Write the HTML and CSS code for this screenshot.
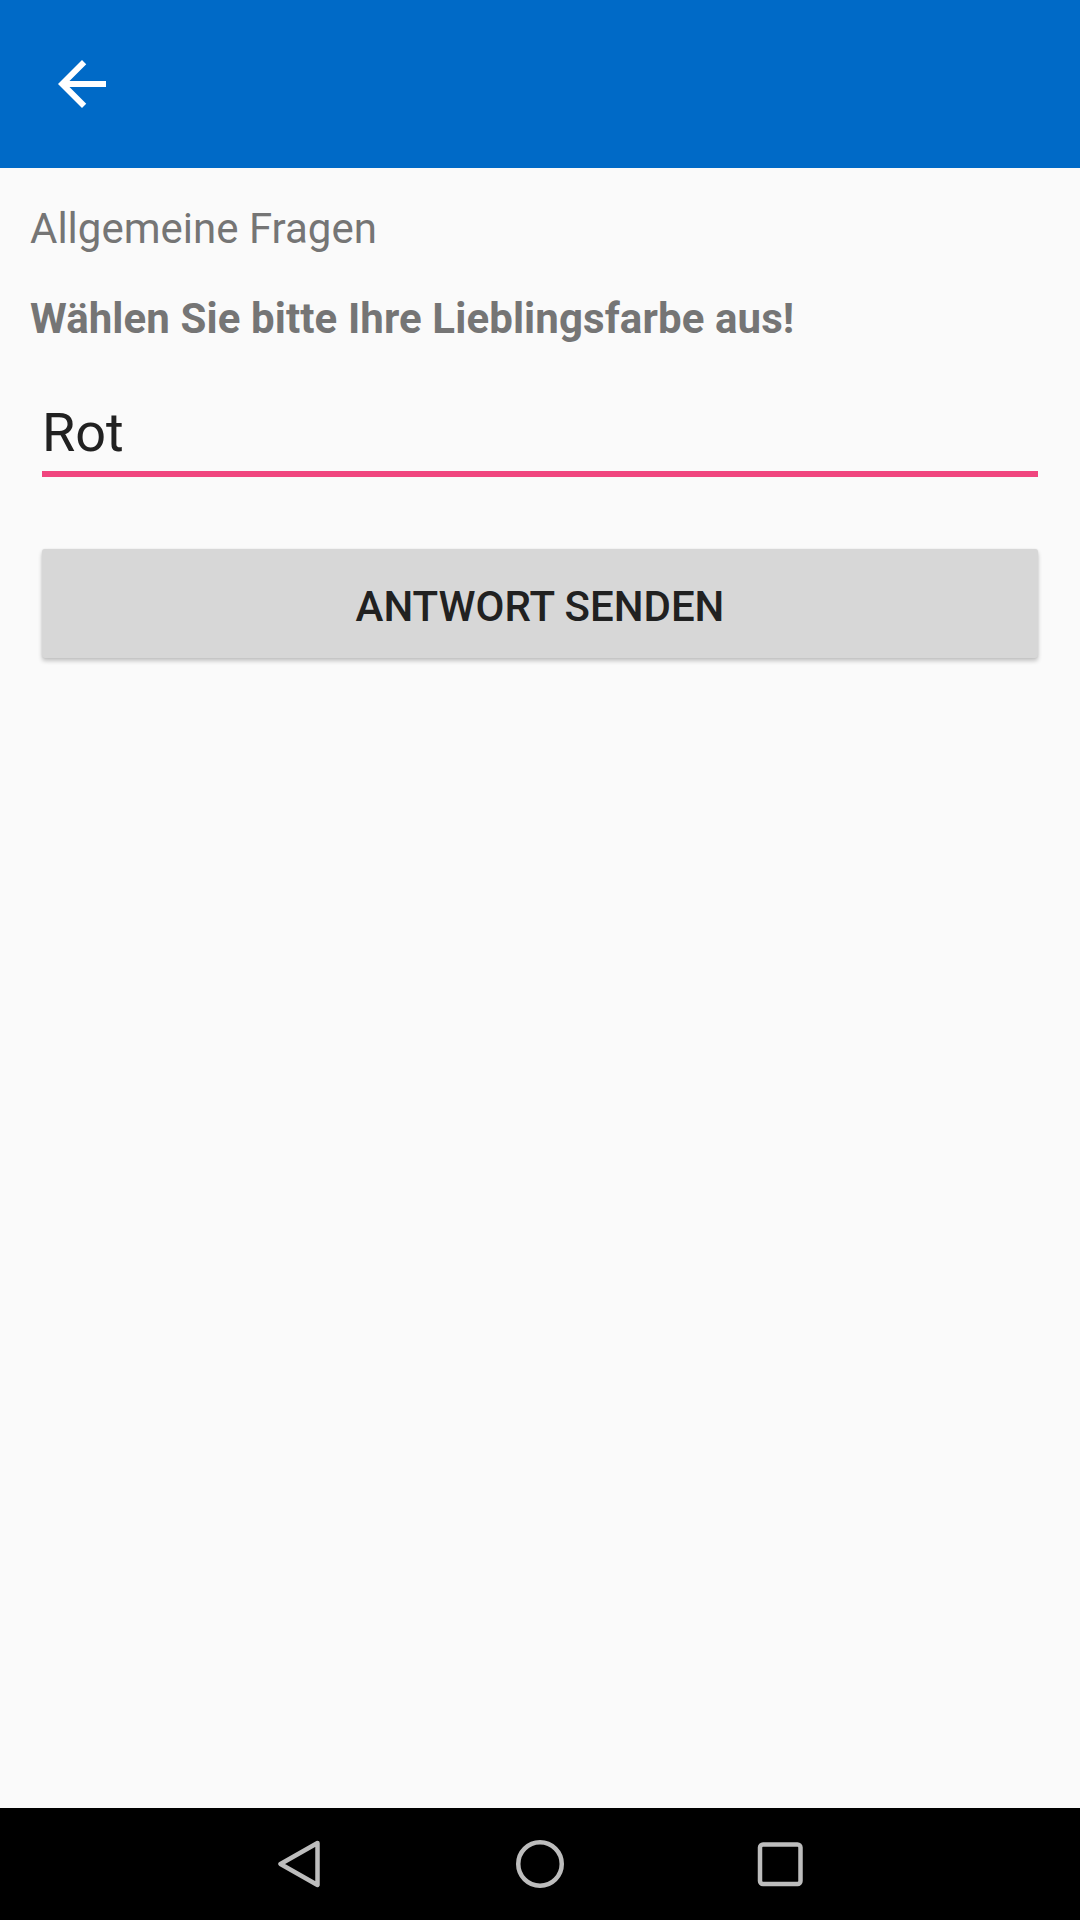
FILE: index.html
```html
<!DOCTYPE html>
<html lang="de">
<head>
<meta charset="utf-8">
<title>Allgemeine Fragen</title>
<link rel="stylesheet" href="styles.css">
</head>
<body>
<div class="screen">
  <header class="toolbar">
    <button class="nav-btn" aria-label="Zurück">
      <svg viewBox="0 0 24 24" width="72" height="72"><path fill="#ffffff" d="M20 11H7.830l5.590-5.590L12 4l-8 8 8 8 1.410-1.410L7.830 13H20v-2z"/></svg>
    </button>
  </header>
  <main class="content">
    <p class="category">Allgemeine Fragen</p>
    <p class="question">Wählen Sie bitte Ihre Lieblingsfarbe aus!</p>
    <div class="field">
      <span class="field-text">Rot</span>
    </div>
    <button class="send-btn">ANTWORT SENDEN</button>
  </main>
  <nav class="sysnav">
    <div class="sysnav-item">
      <svg viewBox="0 0 48 48" width="48" height="48"><path d="M41.5 3 L4.5 24 L41.5 45 Z" fill="none" stroke="#bdbdbd" stroke-width="4.5" stroke-linejoin="round"/></svg>
    </div>
    <div class="sysnav-item">
      <svg viewBox="0 0 48 48" width="48" height="48"><circle cx="24" cy="24" r="21.75" fill="none" stroke="#bdbdbd" stroke-width="4.5"/></svg>
    </div>
    <div class="sysnav-item">
      <svg viewBox="0 0 48 48" width="48" height="48"><rect x="4" y="4.5" width="40.5" height="39.5" rx="3" fill="none" stroke="#bdbdbd" stroke-width="4.5"/></svg>
    </div>
  </nav>
</div>
</body>
</html>
```

FILE: styles.css
```css
* { box-sizing: border-box; }
html, body {
  margin: 0;
  padding: 0;
  background: #fafafa;
  font-family: Roboto, "Noto Sans", "Liberation Sans", sans-serif;
}
.screen {
  width: 1080px;
  height: 1920px;
  display: flex;
  flex-direction: column;
  background: #fafafa;
}
.toolbar {
  height: 168px;
  flex: 0 0 168px;
  background: #006ac7;
  display: flex;
  align-items: center;
  padding-left: 46px;
}
.nav-btn {
  width: 72px;
  height: 72px;
  padding: 0;
  margin: 0;
  border: 0;
  background: transparent;
  display: flex;
}
.content {
  flex: 1;
  display: flex;
  flex-direction: column;
  padding: 33px 42px 0 30px;
}
.category {
  margin: 0;
  font-size: 42px;
  line-height: 56px;
  color: #757575;
  font-weight: 400;
}
.question {
  margin: 34px 0 0 0;
  font-size: 42px;
  line-height: 56px;
  color: #757575;
  font-weight: 700;
  letter-spacing: 0.1px;
}
.field {
  margin: 54px 0 0 12px;
  border-bottom: 6px solid #f0457e;
  padding-bottom: 6px;
}
.field-text {
  display: block;
  font-size: 54px;
  line-height: 64px;
  color: #212121;
}
.send-btn {
  margin: 72px 0 0 12px;
  height: 109px;
  border: 0;
  border-radius: 3px;
  background: #d7d7d7;
  box-shadow: 0 3px 4px rgba(0, 0, 0, 0.22), 0 0 2px rgba(0, 0, 0, 0.08);
  font-family: Roboto, "Noto Sans", "Liberation Sans", sans-serif;
  font-size: 42px;
  font-weight: 500;
  color: #212121;
  display: flex;
  align-items: center;
  justify-content: center;
  padding: 6px 0 0 0;
}
.sysnav {
  flex: 0 0 112px;
  height: 112px;
  background: #000;
  display: flex;
  justify-content: center;
  align-items: center;
}
.sysnav-item {
  width: 240px;
  display: flex;
  justify-content: center;
  align-items: center;
}
```
